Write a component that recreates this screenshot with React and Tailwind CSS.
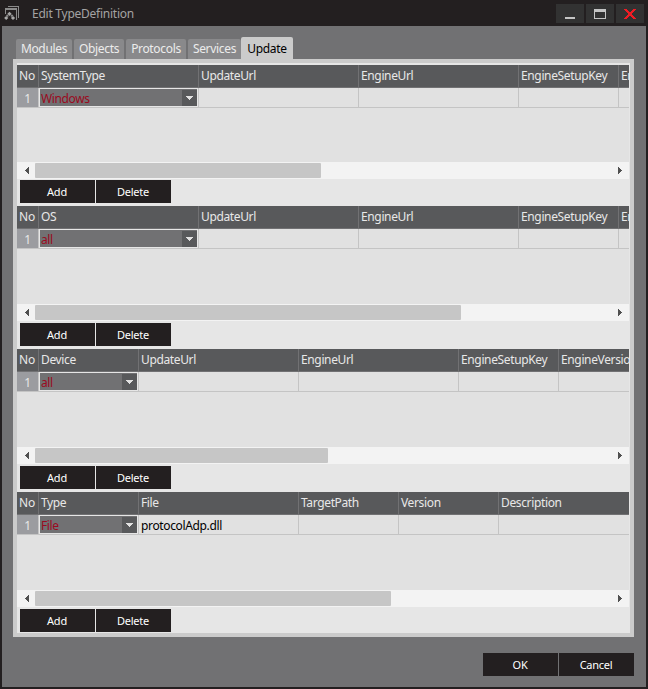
/**
 * TypeDefinitionDialog: "Edit TypeDefinition" window with its Update tab open.
 */
import React, { useState } from 'react'
import clsx from 'clsx'

const TABS = [
  { name: 'Modules', width: 'w-[56px]' },
  { name: 'Objects', width: 'w-[50px]' },
  { name: 'Protocols', width: 'w-[60px]' },
  { name: 'Services', width: 'w-[53px]' },
  { name: 'Update', width: 'w-[52px]' },
]

// w is the column width, including its right grid line
const GRIDS = [
  {
    id: 'system',
    value: 'Windows',
    thumb: 286,
    columns: [
      { name: 'SystemType', w: 160 },
      { name: 'UpdateUrl', w: 160 },
      { name: 'EngineUrl', w: 160 },
      { name: 'EngineSetupKey', w: 100 },
      { name: 'EngineVersion', w: 100 },
    ],
  },
  {
    id: 'os',
    value: 'all',
    thumb: 426,
    columns: [
      { name: 'OS', w: 160 },
      { name: 'UpdateUrl', w: 160 },
      { name: 'EngineUrl', w: 160 },
      { name: 'EngineSetupKey', w: 100 },
      { name: 'EngineVersion', w: 100 },
    ],
  },
  {
    id: 'device',
    value: 'all',
    thumb: 293,
    columns: [
      { name: 'Device', w: 100 },
      { name: 'UpdateUrl', w: 160 },
      { name: 'EngineUrl', w: 160 },
      { name: 'EngineSetupKey', w: 100 },
      { name: 'EngineVersion', w: 100 },
    ],
  },
  {
    id: 'type',
    value: 'File',
    thumb: 356,
    columns: [
      { name: 'Type', w: 100 },
      { name: 'File', w: 160, text: 'protocolAdp.dll' },
      { name: 'TargetPath', w: 100 },
      { name: 'Version', w: 100 },
      { name: 'Description', w: 160 },
    ],
  },
]

function Button({ children }) {
  return (
    <button className="h-[23px] w-[75px] bg-[#231f20] pt-px pr-px text-[11px] leading-[22px] tracking-[-0.25px] text-white">
      {children}
    </button>
  )
}

function WindowButton({ children }) {
  return <button className="flex h-[19px] w-7 items-center justify-center bg-[#323232]">{children}</button>
}

function AppIcon() {
  return (
    <svg width="16" height="16" viewBox="0 0 16 16">
      {/* back and front windows */}
      <path d="M4 1h11v12h-1V2H4z" fill="#8a8a8a" shapeRendering="crispEdges" />
      <path d="M1 3h12v12h-1V5H2v4H1z" fill="#8a8a8a" shapeRendering="crispEdges" />
      {/* diamonds */}
      <path
        d="M5.500 6.700L7.600 8.800 5.500 10.900 3.400 8.800zM2.200 10.900l2.100 2.100-2.100 2.100L0.100 13zM9 10.900l2.100 2.100L9 15.100 6.900 13z"
        fill="#a8a8a8"
      />
      <path d="M3.200 9.200l1.700 1.700-1.200 1.200L2 10.400zM7.800 9.200l1.700 1.200-1.700 1.700-1.500-1.200z" fill="#8a8a8a" />
    </svg>
  )
}

function TitleBar() {
  return (
    <div className="flex h-[26px] items-start pl-1 pr-1">
      <div className="pt-[5px]">
        <AppIcon />
      </div>
      <span className="ml-3 flex-1 pt-[5px] text-[12px] leading-[17px] tracking-[-0.25px] text-[#a3a3a3]">Edit TypeDefinition</span>
      <div className="flex gap-0.5 pt-1">
        <WindowButton>
          <svg width="28" height="19" shapeRendering="crispEdges">
            <path d="M9 13h10v2H9z" fill="#c4c4c4" />
          </svg>
        </WindowButton>
        <WindowButton>
          <svg width="28" height="19" shapeRendering="crispEdges">
            <path d="M8 5h12v10H8zM9 8v6h10V8z" fill="#c4c4c4" fillRule="evenodd" />
          </svg>
        </WindowButton>
        <WindowButton>
          <svg width="28" height="19" shapeRendering="crispEdges">
            <path
              d="M8 5h3v1H8zM17 5h3v1h-3zM9 6h3v1H9zM16 6h3v1h-3zM10 7h3v1h-3zM15 7h3v1h-3zM11 8h6v1h-6zM12 9h4v2h-4zM11 11h6v1h-6zM10 12h3v1h-3zM15 12h3v1h-3zM9 13h3v1H9zM16 13h3v1h-3zM8 14h3v1H8zM17 14h3v1h-3z"
              fill="#ed1c24"
            />
          </svg>
        </WindowButton>
      </div>
    </div>
  )
}

function ComboCell({ value }) {
  return (
    <div className="flex h-full w-full items-stretch border border-[#e6e6e6] bg-[#717173]">
      <span className="flex-1 pl-px leading-[19px] text-[#9b0a20]">{value}</span>
      <span className="mt-px flex w-[15px] items-center justify-center bg-[#58595b]">
        <svg width="7" height="4" shapeRendering="crispEdges">
          <path d="M0 0h7v1H0zM1 1h5v1H1zM2 2h3v1H2zM3 3h1v1H3z" fill="#e1e1e1" />
        </svg>
      </span>
    </div>
  )
}

function ScrollBar({ thumb }) {
  return (
    <div className="flex h-[17px] items-center bg-[#f3f3f3]">
      <span className="flex w-[18px] justify-center pl-0.5">
        <svg width="4" height="7" shapeRendering="crispEdges">
          <path d="M4 0v7L0 3.500z" fill="#505050" />
        </svg>
      </span>
      <span className="h-[15px] rounded-[1px] bg-[#c6c6c6]" style={{ width: thumb }} />
      <span className="ml-auto mr-[7px]">
        <svg className="block" width="4" height="7" shapeRendering="crispEdges">
          <path d="M0 0v7l4-3.500z" fill="#505050" />
        </svg>
      </span>
    </div>
  )
}

function Grid({ grid, first }) {
  return (
    <section>
      <div className="w-[612px] overflow-hidden bg-[#e1e1e1]">
        {/* Header */}
        <div className="flex h-[23px] border-b border-[#717173] bg-[#58595b] leading-[22px] text-[#e8e8e8]">
          <div className="w-[22px] shrink-0 border-r border-[#717173] pl-0.5 tracking-normal">No</div>
          {grid.columns.map(c => (
            <div key={c.name} className="shrink-0 border-r border-[#717173] pl-0.5 whitespace-nowrap" style={{ width: c.w }}>
              {c.name}
            </div>
          ))}
        </div>

        {/* Row */}
        <div className="flex h-5 border-b border-[#c4c4c4]">
          <div className="w-[22px] shrink-0 border-r border-[#c4c4c4] bg-[#9b9ca0] text-center leading-[22px] text-[#e8e8e8]">1</div>
          {grid.columns.map((c, i) => (
            <div key={c.name} className="shrink-0 border-r border-[#c4c4c4]" style={{ width: c.w }}>
              {i === 0 ? <ComboCell value={grid.value} /> : <span className="block pl-0.5 leading-[22px] text-black">{c.text}</span>}
            </div>
          ))}
        </div>
        <div className={first ? 'h-[54px]' : 'h-[55px]'} />
        <ScrollBar thumb={grid.thumb} />
      </div>

      <div className={clsx('flex gap-px pb-[3px] pl-[3px]', first ? 'pt-px' : 'pt-0.5')}>
        <Button>Add</Button>
        <Button>Delete</Button>
      </div>
    </section>
  )
}

export default function App() {
  const [tab, setTab] = useState('Update')

  return (
    <div className="h-[689px] w-[648px] overflow-hidden bg-[#231f20] font-['Noto_Sans','Open_Sans',sans-serif] text-[12px] tracking-[-0.36px]">
      <TitleBar />
      <div className="mx-0.5 h-[661px] bg-[#717173] px-[11px] pt-[11px]">
        {/* Tabs */}
        <div className="flex h-[22px] items-end gap-0.5 pl-[3px]">
          {TABS.map(t => (
            <button
              key={t.name}
              onClick={() => setTab(t.name)}
              className={clsx(
                'rounded-t-[2px] pb-px text-center leading-[19px] tracking-[-0.33px] whitespace-nowrap',
                t.width,
                t.name === tab ? '-ml-0.5 h-[22px] bg-[#cbcbcb] pt-0.5 text-black' : 'h-5 bg-[#89898b] text-[#ececec]',
              )}
            >
              {t.name}
            </button>
          ))}
        </div>

        {/* Update panel */}
        <div className="h-[578px] w-[621px] border-4 border-[#cbcbcb] bg-[#e6e6e6] pt-0.5">
          {GRIDS.map((g, i) => (
            <Grid key={g.id} grid={g} first={i === 0} />
          ))}
        </div>

        <div className="mt-4 flex w-[621px] justify-end gap-px">
          <Button>OK</Button>
          <Button>Cancel</Button>
        </div>
      </div>
    </div>
  )
}
